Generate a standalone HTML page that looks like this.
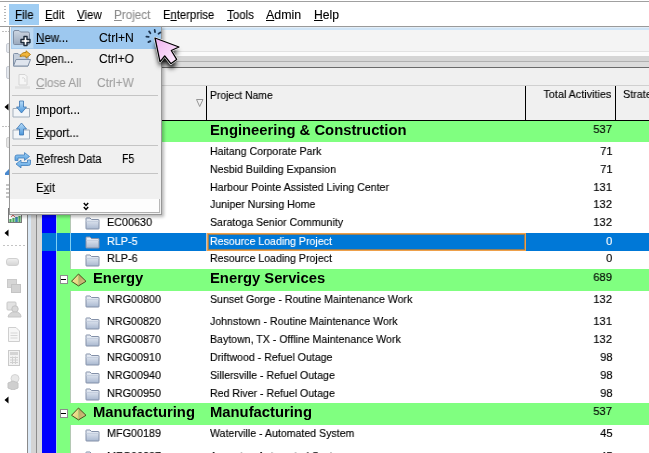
<!DOCTYPE html><html><head><meta charset="utf-8"><style>
*{margin:0;padding:0;box-sizing:border-box}
html,body{width:649px;height:453px;overflow:hidden;background:#fff;position:relative;font-family:"Liberation Sans",sans-serif;color:#000}
.a{position:absolute}
.t{position:absolute;white-space:nowrap;will-change:transform}
.k{-webkit-text-stroke:0.15px currentColor}
.mb{font-size:11.5px;line-height:18px;height:18px;top:6px}
.u{text-decoration:underline;text-underline-offset:1px}
</style></head><body>
<div class="a" style="left:0px;top:0px;width:649px;height:26px;background:#fff;"></div>
<div class="a" style="left:0px;top:1px;width:649px;height:1px;background:#a0a0a0;"></div>
<div class="a" style="left:4px;top:6px;width:2px;height:1px;background:#b5b5b5;"></div>
<div class="a" style="left:4px;top:9px;width:2px;height:1px;background:#b5b5b5;"></div>
<div class="a" style="left:4px;top:12px;width:2px;height:1px;background:#b5b5b5;"></div>
<div class="a" style="left:4px;top:15px;width:2px;height:1px;background:#b5b5b5;"></div>
<div class="a" style="left:4px;top:18px;width:2px;height:1px;background:#b5b5b5;"></div>
<div class="a" style="left:4px;top:21px;width:2px;height:1px;background:#b5b5b5;"></div>
<div class="a" style="left:9px;top:4px;width:30px;height:21px;background:#9fcdf3;"></div>
<div class="t" style="left:15px;top:5.5px;height:18px;line-height:18px;font-size:12px;transform:scaleX(0.959);transform-origin:left center;-webkit-text-stroke:0.12px currentColor;"><span class="u">F</span>ile</div>
<div class="t" style="left:45px;top:5.5px;height:18px;line-height:18px;font-size:12px;transform:scaleX(0.94);transform-origin:left center;-webkit-text-stroke:0.12px currentColor;"><span class="u">E</span>dit</div>
<div class="t" style="left:77px;top:5.5px;height:18px;line-height:18px;font-size:12px;transform:scaleX(0.956);transform-origin:left center;-webkit-text-stroke:0.12px currentColor;"><span class="u">V</span>iew</div>
<div class="t" style="left:114px;top:5.5px;height:18px;line-height:18px;font-size:12px;color:#8d8d8d;transform:scaleX(0.975);transform-origin:left center;-webkit-text-stroke:0.12px currentColor;"><span class="u">P</span>roject</div>
<div class="t" style="left:163px;top:5.5px;height:18px;line-height:18px;font-size:12px;transform:scaleX(0.936);transform-origin:left center;-webkit-text-stroke:0.12px currentColor;">E<span class="u">n</span>terprise</div>
<div class="t" style="left:227px;top:5.5px;height:18px;line-height:18px;font-size:12px;transform:scaleX(0.963);transform-origin:left center;-webkit-text-stroke:0.12px currentColor;"><span class="u">T</span>ools</div>
<div class="t" style="left:266px;top:5.5px;height:18px;line-height:18px;font-size:12px;transform:scaleX(1.033);transform-origin:left center;-webkit-text-stroke:0.12px currentColor;"><span class="u">A</span>dmin</div>
<div class="t" style="left:314px;top:5.5px;height:18px;line-height:18px;font-size:12px;transform:scaleX(1.013);transform-origin:left center;-webkit-text-stroke:0.12px currentColor;"><span class="u">H</span>elp</div>
<div class="a" style="left:0px;top:26px;width:649px;height:1px;background:#9a9a9a;"></div>
<div class="a" style="left:27px;top:27px;width:622px;height:1px;background:#e2edf7;"></div>
<div class="a" style="left:27px;top:28px;width:622px;height:2px;background:#cfe4f6;"></div>
<div class="a" style="left:27px;top:30px;width:622px;height:21px;background:#f4f4f4;"></div>
<div class="a" style="left:27px;top:51px;width:622px;height:1px;background:#e2e2e2;"></div>
<div class="a" style="left:27px;top:52px;width:622px;height:4px;background:#fbfbfb;"></div>
<div class="a" style="left:27px;top:56px;width:622px;height:5px;background:#d5d5d5;"></div>
<div class="a" style="left:27px;top:61px;width:622px;height:1px;background:#b0b0b0;"></div>
<div class="a" style="left:27px;top:62px;width:622px;height:5px;background:#dcdcdc;"></div>
<div class="a" style="left:27px;top:67px;width:622px;height:1px;background:#6a6a6a;"></div>
<div class="a" style="left:37px;top:68px;width:612px;height:53px;background:#f0f0f0;"></div>
<div class="a" style="left:37px;top:85px;width:612px;height:1px;background:#d0d0d0;"></div>
<div class="a" style="left:37px;top:120px;width:612px;height:1px;background:#000;"></div>
<div class="a" style="left:206px;top:86px;width:1px;height:34px;background:#000;"></div>
<div class="a" style="left:525px;top:86px;width:1px;height:34px;background:#000;"></div>
<div class="a" style="left:615px;top:86px;width:1px;height:34px;background:#000;"></div>
<div class="t k" style="left:210px;top:86.0px;height:18px;line-height:18px;font-size:10.9px;transform:scaleX(0.9495);transform-origin:left center;">Project Name</div>
<div class="t k" style="right:38px;top:85.0px;height:18px;line-height:18px;font-size:11.2px;transform:scaleX(0.9643);transform-origin:right center;">Total Activities</div>
<div class="t k" style="left:623px;top:85.0px;height:18px;line-height:18px;font-size:11.2px;transform:scaleX(0.9643);transform-origin:left center;">Strategy</div>
<svg class="a" style="left:195px;top:98px" width="10" height="10" viewBox="0 0 10 10"><path d="M1.5 1.5 L8 1.5 L4.7 8.5 Z" fill="none" stroke="#8c8c8c" stroke-width="0.9"/></svg>
<div class="a" style="left:27px;top:67px;width:1px;height:386px;background:#8a8a8a;"></div>
<div class="a" style="left:28px;top:68px;width:3px;height:385px;background:#dbe9f6;"></div>
<div class="a" style="left:31px;top:68px;width:5px;height:385px;background:#d4d4d4;"></div>
<div class="a" style="left:36px;top:68px;width:1px;height:385px;background:#8c8c8c;"></div>
<div class="a" style="left:37px;top:121px;width:5px;height:332px;background:#d8d8d8;"></div>
<div class="a" style="left:42px;top:121px;width:14px;height:332px;background:#0000ff;"></div>
<div class="a" style="left:56px;top:121px;width:15px;height:332px;background:#80ff80;"></div>
<div class="a" style="left:70px;top:121px;width:1px;height:332px;background:#b4c8b4;"></div>
<div class="a" style="left:71px;top:121px;width:578px;height:21px;background:#80ff80;"></div>
<div class="a" style="left:56px;top:121px;width:15px;height:21px;background:#80ff80;"></div>
<div class="t" style="left:210px;top:119.69999999999999px;height:20px;line-height:20px;font-size:14.8px;font-weight:bold">Engineering & Construction</div>
<div class="t k" style="right:36.5px;top:119.69999999999999px;height:18px;line-height:18px;font-size:11.4px;transform:scaleX(0.9825);transform-origin:right center;">537</div>
<svg class="a" style="left:85px;top:146.7px" width="15" height="13" viewBox="0 0 15 13"><defs><linearGradient id="fg" x1="0" y1="0" x2="0" y2="1"><stop offset="0" stop-color="#eef2f8"/><stop offset="1" stop-color="#a9b8d0"/></linearGradient></defs><path d="M1 3.5 V1.5 Q1 1 1.5 1 H5 L6.5 2.5 H13.5 Q14 2.5 14 3 V11.5 Q14 12 13.5 12 H1.5 Q1 12 1 11.5 Z" fill="url(#fg)" stroke="#8390a8" stroke-width="1"/><path d="M1.5 4.5 H13.5" stroke="#c5cfdf" stroke-width="1"/></svg>
<div class="t k" style="left:210px;top:142.0px;height:18px;line-height:18px;font-size:11.4px;transform:scaleX(0.9298);transform-origin:left center;">Haitang Corporate Park</div>
<div class="t k" style="right:36.5px;top:142.0px;height:18px;line-height:18px;font-size:11.4px;transform:scaleX(0.9825);transform-origin:right center;">71</div>
<svg class="a" style="left:85px;top:164.2px" width="15" height="13" viewBox="0 0 15 13"><defs><linearGradient id="fg" x1="0" y1="0" x2="0" y2="1"><stop offset="0" stop-color="#eef2f8"/><stop offset="1" stop-color="#a9b8d0"/></linearGradient></defs><path d="M1 3.5 V1.5 Q1 1 1.5 1 H5 L6.5 2.5 H13.5 Q14 2.5 14 3 V11.5 Q14 12 13.5 12 H1.5 Q1 12 1 11.5 Z" fill="url(#fg)" stroke="#8390a8" stroke-width="1"/><path d="M1.5 4.5 H13.5" stroke="#c5cfdf" stroke-width="1"/></svg>
<div class="t k" style="left:210px;top:159.5px;height:18px;line-height:18px;font-size:11.4px;transform:scaleX(0.9298);transform-origin:left center;">Nesbid Building Expansion</div>
<div class="t k" style="right:36.5px;top:159.5px;height:18px;line-height:18px;font-size:11.4px;transform:scaleX(0.9825);transform-origin:right center;">71</div>
<svg class="a" style="left:85px;top:182.2px" width="15" height="13" viewBox="0 0 15 13"><defs><linearGradient id="fg" x1="0" y1="0" x2="0" y2="1"><stop offset="0" stop-color="#eef2f8"/><stop offset="1" stop-color="#a9b8d0"/></linearGradient></defs><path d="M1 3.5 V1.5 Q1 1 1.5 1 H5 L6.5 2.5 H13.5 Q14 2.5 14 3 V11.5 Q14 12 13.5 12 H1.5 Q1 12 1 11.5 Z" fill="url(#fg)" stroke="#8390a8" stroke-width="1"/><path d="M1.5 4.5 H13.5" stroke="#c5cfdf" stroke-width="1"/></svg>
<div class="t k" style="left:210px;top:177.5px;height:18px;line-height:18px;font-size:11.4px;transform:scaleX(0.9298);transform-origin:left center;">Harbour Pointe Assisted Living Center</div>
<div class="t k" style="right:36.5px;top:177.5px;height:18px;line-height:18px;font-size:11.4px;transform:scaleX(0.9825);transform-origin:right center;">131</div>
<svg class="a" style="left:85px;top:199.7px" width="15" height="13" viewBox="0 0 15 13"><defs><linearGradient id="fg" x1="0" y1="0" x2="0" y2="1"><stop offset="0" stop-color="#eef2f8"/><stop offset="1" stop-color="#a9b8d0"/></linearGradient></defs><path d="M1 3.5 V1.5 Q1 1 1.5 1 H5 L6.5 2.5 H13.5 Q14 2.5 14 3 V11.5 Q14 12 13.5 12 H1.5 Q1 12 1 11.5 Z" fill="url(#fg)" stroke="#8390a8" stroke-width="1"/><path d="M1.5 4.5 H13.5" stroke="#c5cfdf" stroke-width="1"/></svg>
<div class="t k" style="left:210px;top:195.0px;height:18px;line-height:18px;font-size:11.4px;transform:scaleX(0.9298);transform-origin:left center;">Juniper Nursing Home</div>
<div class="t k" style="right:36.5px;top:195.0px;height:18px;line-height:18px;font-size:11.4px;transform:scaleX(0.9825);transform-origin:right center;">132</div>
<svg class="a" style="left:85px;top:217.2px" width="15" height="13" viewBox="0 0 15 13"><defs><linearGradient id="fg" x1="0" y1="0" x2="0" y2="1"><stop offset="0" stop-color="#eef2f8"/><stop offset="1" stop-color="#a9b8d0"/></linearGradient></defs><path d="M1 3.5 V1.5 Q1 1 1.5 1 H5 L6.5 2.5 H13.5 Q14 2.5 14 3 V11.5 Q14 12 13.5 12 H1.5 Q1 12 1 11.5 Z" fill="url(#fg)" stroke="#8390a8" stroke-width="1"/><path d="M1.5 4.5 H13.5" stroke="#c5cfdf" stroke-width="1"/></svg>
<div class="t k" style="left:107px;top:212.5px;height:18px;line-height:18px;font-size:11.4px;transform:scaleX(0.9474);transform-origin:left center;">EC00630</div>
<div class="t k" style="left:210px;top:212.5px;height:18px;line-height:18px;font-size:11.4px;transform:scaleX(0.9298);transform-origin:left center;">Saratoga Senior Community</div>
<div class="t k" style="right:36.5px;top:212.5px;height:18px;line-height:18px;font-size:11.4px;transform:scaleX(0.9825);transform-origin:right center;">132</div>
<div class="a" style="left:42px;top:233px;width:607px;height:18px;background:#0078d7;"></div>
<div class="a" style="left:56px;top:233px;width:1px;height:18px;background:#7fd0f4;"></div>
<div class="a" style="left:70px;top:233px;width:1px;height:18px;background:#7fd0f4;"></div>
<div class="a" style="left:206px;top:233px;width:1px;height:18px;background:#b8c4cc;"></div>
<div class="a" style="left:207px;top:233px;width:319px;height:18px;border:1px solid #eea04a;box-shadow:inset 0 0 0 1px #94805e"></div>
<svg class="a" style="left:85px;top:236.2px" width="15" height="13" viewBox="0 0 15 13"><defs><linearGradient id="fg" x1="0" y1="0" x2="0" y2="1"><stop offset="0" stop-color="#eef2f8"/><stop offset="1" stop-color="#a9b8d0"/></linearGradient></defs><path d="M1 3.5 V1.5 Q1 1 1.5 1 H5 L6.5 2.5 H13.5 Q14 2.5 14 3 V11.5 Q14 12 13.5 12 H1.5 Q1 12 1 11.5 Z" fill="url(#fg)" stroke="#8390a8" stroke-width="1"/><path d="M1.5 4.5 H13.5" stroke="#c5cfdf" stroke-width="1"/></svg>
<div class="t k" style="left:107px;top:231.5px;height:18px;line-height:18px;font-size:11.4px;color:#fff;transform:scaleX(0.9474);transform-origin:left center;">RLP-5</div>
<div class="t k" style="left:210px;top:231.5px;height:18px;line-height:18px;font-size:11.4px;color:#fff;transform:scaleX(0.9298);transform-origin:left center;">Resource Loading Project</div>
<div class="t k" style="right:36.5px;top:231.5px;height:18px;line-height:18px;font-size:11.4px;color:#fff;transform:scaleX(0.9825);transform-origin:right center;">0</div>
<svg class="a" style="left:85px;top:254.0px" width="15" height="13" viewBox="0 0 15 13"><defs><linearGradient id="fg" x1="0" y1="0" x2="0" y2="1"><stop offset="0" stop-color="#eef2f8"/><stop offset="1" stop-color="#a9b8d0"/></linearGradient></defs><path d="M1 3.5 V1.5 Q1 1 1.5 1 H5 L6.5 2.5 H13.5 Q14 2.5 14 3 V11.5 Q14 12 13.5 12 H1.5 Q1 12 1 11.5 Z" fill="url(#fg)" stroke="#8390a8" stroke-width="1"/><path d="M1.5 4.5 H13.5" stroke="#c5cfdf" stroke-width="1"/></svg>
<div class="t k" style="left:107px;top:249.3px;height:18px;line-height:18px;font-size:11.4px;transform:scaleX(0.9474);transform-origin:left center;">RLP-6</div>
<div class="t k" style="left:210px;top:249.3px;height:18px;line-height:18px;font-size:11.4px;transform:scaleX(0.9298);transform-origin:left center;">Resource Loading Project</div>
<div class="t k" style="right:36.5px;top:249.3px;height:18px;line-height:18px;font-size:11.4px;transform:scaleX(0.9825);transform-origin:right center;">0</div>
<div class="a" style="left:71px;top:269px;width:578px;height:21.5px;background:#80ff80;"></div>
<div class="a" style="left:56px;top:269px;width:15px;height:21.5px;background:#80ff80;"></div>
<div class="a" style="left:59.5px;top:275.25px;width:8.5px;height:8.5px;background:#fff;border:1px solid #8c8c8c"></div>
<div class="a" style="left:61px;top:278.75px;width:5px;height:1.6px;background:#000;"></div>
<svg class="a" style="left:71px;top:273.25px" width="16" height="14" viewBox="0 0 16 14"><defs><linearGradient id="pyl" x1="0" y1="0" x2="1" y2="1"><stop offset="0" stop-color="#f6ec9e"/><stop offset="1" stop-color="#e2cf7a"/></linearGradient><linearGradient id="pyr" x1="0" y1="0" x2="1" y2="1"><stop offset="0" stop-color="#b6a25a"/><stop offset="1" stop-color="#d8c88a"/></linearGradient></defs><path d="M7.5 1 L0.5 8.3 L7.5 12.9 Z" fill="url(#pyl)"/><path d="M7.5 1 L15 8.3 L7.5 12.9 Z" fill="url(#pyr)"/><path d="M7.5 1 L0.5 8.3 L7.5 12.9 L15 8.3 Z" fill="none" stroke="#3f3f14" stroke-width="0.9" stroke-linejoin="round"/></svg>
<div class="t" style="left:93px;top:267.95px;height:20px;line-height:20px;font-size:14.8px;font-weight:bold">Energy</div>
<div class="t" style="left:210px;top:267.95px;height:20px;line-height:20px;font-size:14.8px;font-weight:bold">Energy Services</div>
<div class="t k" style="right:36.5px;top:267.95px;height:18px;line-height:18px;font-size:11.4px;transform:scaleX(0.9825);transform-origin:right center;">689</div>
<svg class="a" style="left:85px;top:294.9px" width="15" height="13" viewBox="0 0 15 13"><defs><linearGradient id="fg" x1="0" y1="0" x2="0" y2="1"><stop offset="0" stop-color="#eef2f8"/><stop offset="1" stop-color="#a9b8d0"/></linearGradient></defs><path d="M1 3.5 V1.5 Q1 1 1.5 1 H5 L6.5 2.5 H13.5 Q14 2.5 14 3 V11.5 Q14 12 13.5 12 H1.5 Q1 12 1 11.5 Z" fill="url(#fg)" stroke="#8390a8" stroke-width="1"/><path d="M1.5 4.5 H13.5" stroke="#c5cfdf" stroke-width="1"/></svg>
<div class="t k" style="left:107px;top:290.2px;height:18px;line-height:18px;font-size:11.4px;transform:scaleX(0.9474);transform-origin:left center;">NRG00800</div>
<div class="t k" style="left:210px;top:290.2px;height:18px;line-height:18px;font-size:11.4px;transform:scaleX(0.9298);transform-origin:left center;">Sunset Gorge - Routine Maintenance Work</div>
<div class="t k" style="right:36.5px;top:290.2px;height:18px;line-height:18px;font-size:11.4px;transform:scaleX(0.9825);transform-origin:right center;">132</div>
<svg class="a" style="left:85px;top:316.5px" width="15" height="13" viewBox="0 0 15 13"><defs><linearGradient id="fg" x1="0" y1="0" x2="0" y2="1"><stop offset="0" stop-color="#eef2f8"/><stop offset="1" stop-color="#a9b8d0"/></linearGradient></defs><path d="M1 3.5 V1.5 Q1 1 1.5 1 H5 L6.5 2.5 H13.5 Q14 2.5 14 3 V11.5 Q14 12 13.5 12 H1.5 Q1 12 1 11.5 Z" fill="url(#fg)" stroke="#8390a8" stroke-width="1"/><path d="M1.5 4.5 H13.5" stroke="#c5cfdf" stroke-width="1"/></svg>
<div class="t k" style="left:107px;top:311.8px;height:18px;line-height:18px;font-size:11.4px;transform:scaleX(0.9474);transform-origin:left center;">NRG00820</div>
<div class="t k" style="left:210px;top:311.8px;height:18px;line-height:18px;font-size:11.4px;transform:scaleX(0.9298);transform-origin:left center;">Johnstown - Routine Maintenance Work</div>
<div class="t k" style="right:36.5px;top:311.8px;height:18px;line-height:18px;font-size:11.4px;transform:scaleX(0.9825);transform-origin:right center;">131</div>
<svg class="a" style="left:85px;top:334.2px" width="15" height="13" viewBox="0 0 15 13"><defs><linearGradient id="fg" x1="0" y1="0" x2="0" y2="1"><stop offset="0" stop-color="#eef2f8"/><stop offset="1" stop-color="#a9b8d0"/></linearGradient></defs><path d="M1 3.5 V1.5 Q1 1 1.5 1 H5 L6.5 2.5 H13.5 Q14 2.5 14 3 V11.5 Q14 12 13.5 12 H1.5 Q1 12 1 11.5 Z" fill="url(#fg)" stroke="#8390a8" stroke-width="1"/><path d="M1.5 4.5 H13.5" stroke="#c5cfdf" stroke-width="1"/></svg>
<div class="t k" style="left:107px;top:329.5px;height:18px;line-height:18px;font-size:11.4px;transform:scaleX(0.9474);transform-origin:left center;">NRG00870</div>
<div class="t k" style="left:210px;top:329.5px;height:18px;line-height:18px;font-size:11.4px;transform:scaleX(0.9298);transform-origin:left center;">Baytown, TX - Offline Maintenance Work</div>
<div class="t k" style="right:36.5px;top:329.5px;height:18px;line-height:18px;font-size:11.4px;transform:scaleX(0.9825);transform-origin:right center;">132</div>
<svg class="a" style="left:85px;top:353.0px" width="15" height="13" viewBox="0 0 15 13"><defs><linearGradient id="fg" x1="0" y1="0" x2="0" y2="1"><stop offset="0" stop-color="#eef2f8"/><stop offset="1" stop-color="#a9b8d0"/></linearGradient></defs><path d="M1 3.5 V1.5 Q1 1 1.5 1 H5 L6.5 2.5 H13.5 Q14 2.5 14 3 V11.5 Q14 12 13.5 12 H1.5 Q1 12 1 11.5 Z" fill="url(#fg)" stroke="#8390a8" stroke-width="1"/><path d="M1.5 4.5 H13.5" stroke="#c5cfdf" stroke-width="1"/></svg>
<div class="t k" style="left:107px;top:348.3px;height:18px;line-height:18px;font-size:11.4px;transform:scaleX(0.9474);transform-origin:left center;">NRG00910</div>
<div class="t k" style="left:210px;top:348.3px;height:18px;line-height:18px;font-size:11.4px;transform:scaleX(0.9298);transform-origin:left center;">Driftwood - Refuel Outage</div>
<div class="t k" style="right:36.5px;top:348.3px;height:18px;line-height:18px;font-size:11.4px;transform:scaleX(0.9825);transform-origin:right center;">98</div>
<svg class="a" style="left:85px;top:370.8px" width="15" height="13" viewBox="0 0 15 13"><defs><linearGradient id="fg" x1="0" y1="0" x2="0" y2="1"><stop offset="0" stop-color="#eef2f8"/><stop offset="1" stop-color="#a9b8d0"/></linearGradient></defs><path d="M1 3.5 V1.5 Q1 1 1.5 1 H5 L6.5 2.5 H13.5 Q14 2.5 14 3 V11.5 Q14 12 13.5 12 H1.5 Q1 12 1 11.5 Z" fill="url(#fg)" stroke="#8390a8" stroke-width="1"/><path d="M1.5 4.5 H13.5" stroke="#c5cfdf" stroke-width="1"/></svg>
<div class="t k" style="left:107px;top:366.1px;height:18px;line-height:18px;font-size:11.4px;transform:scaleX(0.9474);transform-origin:left center;">NRG00940</div>
<div class="t k" style="left:210px;top:366.1px;height:18px;line-height:18px;font-size:11.4px;transform:scaleX(0.9298);transform-origin:left center;">Sillersville - Refuel Outage</div>
<div class="t k" style="right:36.5px;top:366.1px;height:18px;line-height:18px;font-size:11.4px;transform:scaleX(0.9825);transform-origin:right center;">98</div>
<svg class="a" style="left:85px;top:388.4px" width="15" height="13" viewBox="0 0 15 13"><defs><linearGradient id="fg" x1="0" y1="0" x2="0" y2="1"><stop offset="0" stop-color="#eef2f8"/><stop offset="1" stop-color="#a9b8d0"/></linearGradient></defs><path d="M1 3.5 V1.5 Q1 1 1.5 1 H5 L6.5 2.5 H13.5 Q14 2.5 14 3 V11.5 Q14 12 13.5 12 H1.5 Q1 12 1 11.5 Z" fill="url(#fg)" stroke="#8390a8" stroke-width="1"/><path d="M1.5 4.5 H13.5" stroke="#c5cfdf" stroke-width="1"/></svg>
<div class="t k" style="left:107px;top:383.7px;height:18px;line-height:18px;font-size:11.4px;transform:scaleX(0.9474);transform-origin:left center;">NRG00950</div>
<div class="t k" style="left:210px;top:383.7px;height:18px;line-height:18px;font-size:11.4px;transform:scaleX(0.9298);transform-origin:left center;">Red River - Refuel Outage</div>
<div class="t k" style="right:36.5px;top:383.7px;height:18px;line-height:18px;font-size:11.4px;transform:scaleX(0.9825);transform-origin:right center;">98</div>
<div class="a" style="left:71px;top:403px;width:578px;height:21.5px;background:#80ff80;"></div>
<div class="a" style="left:56px;top:403px;width:15px;height:21.5px;background:#80ff80;"></div>
<div class="a" style="left:59.5px;top:409.25px;width:8.5px;height:8.5px;background:#fff;border:1px solid #8c8c8c"></div>
<div class="a" style="left:61px;top:412.75px;width:5px;height:1.6px;background:#000;"></div>
<svg class="a" style="left:71px;top:407.25px" width="16" height="14" viewBox="0 0 16 14"><defs><linearGradient id="pyl" x1="0" y1="0" x2="1" y2="1"><stop offset="0" stop-color="#f6ec9e"/><stop offset="1" stop-color="#e2cf7a"/></linearGradient><linearGradient id="pyr" x1="0" y1="0" x2="1" y2="1"><stop offset="0" stop-color="#b6a25a"/><stop offset="1" stop-color="#d8c88a"/></linearGradient></defs><path d="M7.5 1 L0.5 8.3 L7.5 12.9 Z" fill="url(#pyl)"/><path d="M7.5 1 L15 8.3 L7.5 12.9 Z" fill="url(#pyr)"/><path d="M7.5 1 L0.5 8.3 L7.5 12.9 L15 8.3 Z" fill="none" stroke="#3f3f14" stroke-width="0.9" stroke-linejoin="round"/></svg>
<div class="t" style="left:93px;top:401.95px;height:20px;line-height:20px;font-size:14.8px;font-weight:bold">Manufacturing</div>
<div class="t" style="left:210px;top:401.95px;height:20px;line-height:20px;font-size:14.8px;font-weight:bold">Manufacturing</div>
<div class="t k" style="right:36.5px;top:401.95px;height:18px;line-height:18px;font-size:11.4px;transform:scaleX(0.9825);transform-origin:right center;">537</div>
<svg class="a" style="left:85px;top:428.5px" width="15" height="13" viewBox="0 0 15 13"><defs><linearGradient id="fg" x1="0" y1="0" x2="0" y2="1"><stop offset="0" stop-color="#eef2f8"/><stop offset="1" stop-color="#a9b8d0"/></linearGradient></defs><path d="M1 3.5 V1.5 Q1 1 1.5 1 H5 L6.5 2.5 H13.5 Q14 2.5 14 3 V11.5 Q14 12 13.5 12 H1.5 Q1 12 1 11.5 Z" fill="url(#fg)" stroke="#8390a8" stroke-width="1"/><path d="M1.5 4.5 H13.5" stroke="#c5cfdf" stroke-width="1"/></svg>
<div class="t k" style="left:107px;top:423.8px;height:18px;line-height:18px;font-size:11.4px;transform:scaleX(0.9474);transform-origin:left center;">MFG00189</div>
<div class="t k" style="left:210px;top:423.8px;height:18px;line-height:18px;font-size:11.4px;transform:scaleX(0.9298);transform-origin:left center;">Waterville - Automated System</div>
<div class="t k" style="right:36.5px;top:423.8px;height:18px;line-height:18px;font-size:11.4px;transform:scaleX(0.9825);transform-origin:right center;">45</div>
<svg class="a" style="left:85px;top:451.2px" width="15" height="13" viewBox="0 0 15 13"><defs><linearGradient id="fg" x1="0" y1="0" x2="0" y2="1"><stop offset="0" stop-color="#eef2f8"/><stop offset="1" stop-color="#a9b8d0"/></linearGradient></defs><path d="M1 3.5 V1.5 Q1 1 1.5 1 H5 L6.5 2.5 H13.5 Q14 2.5 14 3 V11.5 Q14 12 13.5 12 H1.5 Q1 12 1 11.5 Z" fill="url(#fg)" stroke="#8390a8" stroke-width="1"/><path d="M1.5 4.5 H13.5" stroke="#c5cfdf" stroke-width="1"/></svg>
<div class="t k" style="left:107px;top:446.5px;height:18px;line-height:18px;font-size:11.4px;transform:scaleX(0.9474);transform-origin:left center;">MFG00237</div>
<div class="t k" style="left:210px;top:446.5px;height:18px;line-height:18px;font-size:11.4px;transform:scaleX(0.9298);transform-origin:left center;">Augusta - Automated System</div>
<div class="t k" style="right:36.5px;top:446.5px;height:18px;line-height:18px;font-size:11.4px;transform:scaleX(0.9825);transform-origin:right center;">45</div>
<div class="a" style="left:56px;top:121px;width:1px;height:112px;background:#a6dcd4;"></div>
<div class="a" style="left:56px;top:251px;width:1px;height:202px;background:#a6dcd4;"></div>
<div class="a" style="left:0px;top:27px;width:27px;height:426px;background:#fff;"></div>
<div class="a" style="left:2px;top:31px;width:1.5px;height:1px;background:#c0c0c0;"></div>
<div class="a" style="left:2px;top:126px;width:1.5px;height:1px;background:#c0c0c0;"></div>
<div class="a" style="left:5px;top:31px;width:1.5px;height:1px;background:#c0c0c0;"></div>
<div class="a" style="left:5px;top:126px;width:1.5px;height:1px;background:#c0c0c0;"></div>
<div class="a" style="left:8px;top:31px;width:1.5px;height:1px;background:#c0c0c0;"></div>
<div class="a" style="left:8px;top:126px;width:1.5px;height:1px;background:#c0c0c0;"></div>
<div class="a" style="left:6px;top:43px;width:6px;height:10px;background:#e4e8ee;border:1px solid #c8ccd4;border-radius:2px"></div>
<div class="a" style="left:6px;top:66px;width:6px;height:13px;background:#e4e8ee;border:1px solid #c8ccd4;border-radius:2px"></div>
<div class="a" style="left:6px;top:137px;width:6px;height:11px;background:#e6e6e6;border:1px solid #cfcfcf;border-radius:2px"></div>
<svg class="a" style="left:4px;top:103px" width="5" height="8" viewBox="0 0 5 8"><path d="M4.5 0.5 L0.5 4 L4.5 7.5Z" fill="#000"/></svg>
<svg class="a" style="left:5px;top:169px" width="6" height="6" viewBox="0 0 6 6"><path d="M0 4 L4 0 L6 2 L6 6 L0 6Z" fill="#4a8ad0"/></svg>
<svg class="a" style="left:6px;top:183px" width="5" height="16" viewBox="0 0 5 16"><path d="M0 2 H5 M0 6 H5 M0 10 H5 M0 14 H5" stroke="#8a8a8a" stroke-width="1"/></svg>
<div class="a" style="left:7.5px;top:208px;width:14px;height:15px;background:#fff;border:1px solid #7a7a7a"></div>
<svg class="a" style="left:9px;top:215px" width="12" height="7" viewBox="0 0 12 7"><path d="M2 2 L4 0 L6 2" stroke="#e07070" fill="none" stroke-width="1"/><path d="M1.5 7 V4 M4.5 7 V3 M7.5 7 V2 M10.5 7 V1" stroke="#4aa85a" stroke-width="2.2"/><path d="M7.5 7 V2" stroke="#3a80b8" stroke-width="2.2"/></svg>
<svg class="a" style="left:4px;top:229px" width="5" height="8" viewBox="0 0 5 8"><path d="M4.5 0.5 L0.5 4 L4.5 7.5Z" fill="#000"/></svg>
<div class="a" style="left:3px;top:245px;width:2px;height:1px;background:#c4c4c4;"></div>
<div class="a" style="left:7px;top:245px;width:2px;height:1px;background:#c4c4c4;"></div>
<div class="a" style="left:11px;top:245px;width:2px;height:1px;background:#c4c4c4;"></div>
<div class="a" style="left:15px;top:245px;width:2px;height:1px;background:#c4c4c4;"></div>
<div class="a" style="left:19px;top:245px;width:2px;height:1px;background:#c4c4c4;"></div>
<div class="a" style="left:23px;top:245px;width:2px;height:1px;background:#c4c4c4;"></div>
<div class="a" style="left:6px;top:258px;width:13px;height:8px;border-radius:3px;background:linear-gradient(#eeeeee,#d6d6d6);border:1px solid #d0d0d0"></div>
<div class="a" style="left:7px;top:279px;width:10px;height:9px;background:#d6d6d6;border:1px solid #cacaca"></div>
<div class="a" style="left:11px;top:284px;width:10px;height:9px;background:#d2d2d2;border:1px solid #c4c4c4"></div>
<svg class="a" style="left:6px;top:301px" width="16" height="17" viewBox="0 0 16 17"><rect x="1" y="1" width="9" height="8" rx="1" fill="#e2e2e2" stroke="#c8c8c8"/><circle cx="9" cy="8" r="3.2" fill="#d8d8d8" stroke="#c4c4c4"/><path d="M2 16 Q3 11 9 11 Q15 11 15 16Z" fill="#d6d6d6" stroke="#c6c6c6"/></svg>
<svg class="a" style="left:8px;top:327px" width="12" height="15" viewBox="0 0 12 15"><path d="M0.5 0.5 H8 L11.5 4 V14.5 H0.5Z" fill="#f6f6f6" stroke="#cfcfcf"/><path d="M2.5 6 H9.5 M2.5 8.5 H9.5 M2.5 11 H9.5" stroke="#d6d6d6"/></svg>
<svg class="a" style="left:8px;top:350px" width="12" height="16" viewBox="0 0 12 16"><rect x="0.5" y="0.5" width="11" height="15" fill="#f2f2f2" stroke="#cacaca"/><rect x="2" y="2" width="8" height="3" fill="#d4d4d4"/><path d="M2 7.5 H10 M2 10 H10 M2 12.5 H10 M4.5 6.5 V14 M7.5 6.5 V14" stroke="#d0d0d0"/></svg>
<svg class="a" style="left:7px;top:374px" width="13" height="16" viewBox="0 0 13 16"><ellipse cx="8" cy="4.5" rx="4" ry="4" fill="#e8e8e8" stroke="#d4d4d4"/><path d="M1 9 L6 7 L11 9 V14 L6 16 L1 14Z" fill="#cfcfcf" stroke="#c4c4c4"/></svg>
<svg class="a" style="left:4px;top:396px" width="5" height="8" viewBox="0 0 5 8"><path d="M4.5 0.5 L0.5 4 L4.5 7.5Z" fill="#000"/></svg>
<div class="a" style="left:9px;top:26px;width:153px;height:189px;box-shadow:2px 2px 3px rgba(0,0,0,0.28)"></div>
<div class="a" style="left:9px;top:26px;width:153px;height:189px;background:#f0f0f0;border:1px solid #979797"></div>
<div class="a" style="left:10px;top:199px;width:150px;height:14px;background:#fdfdfd;"></div>
<div class="a" style="left:159px;top:199px;width:1px;height:13px;background:#b8b8b8;"></div>
<div class="a" style="left:10px;top:212px;width:150px;height:1px;background:#b0b0b0;"></div>
<div class="a" style="left:11px;top:27px;width:150px;height:22px;background:#9dc8ef;"></div>
<div class="a" style="left:11px;top:27px;width:23px;height:22px;background:#bcd9f2;border:1px solid #a9cdee"></div>
<div class="t" style="left:36px;top:28.4px;height:20px;line-height:20px;font-size:12px;transform:scaleX(0.967);transform-origin:left center;-webkit-text-stroke:0.12px currentColor;"><span class="u">N</span>ew...</div>
<div class="t" style="left:98.6px;top:28.4px;height:20px;line-height:20px;font-size:12px;transform:scaleX(1.013);transform-origin:left center;-webkit-text-stroke:0.12px currentColor;">Ctrl+N</div>
<div class="t" style="left:36px;top:49.3px;height:20px;line-height:20px;font-size:12px;transform:scaleX(0.948);transform-origin:left center;-webkit-text-stroke:0.12px currentColor;"><span class="u">O</span>pen...</div>
<div class="t" style="left:98.6px;top:49.3px;height:20px;line-height:20px;font-size:12px;transform:scaleX(0.993);transform-origin:left center;-webkit-text-stroke:0.12px currentColor;">Ctrl+O</div>
<div class="t" style="left:36px;top:72.5px;height:20px;line-height:20px;font-size:12px;color:#a0a0a0;transform:scaleX(0.971);transform-origin:left center;-webkit-text-stroke:0.12px currentColor;"><span class="u">C</span>lose All</div>
<div class="t" style="left:97px;top:72.5px;height:20px;line-height:20px;font-size:12px;color:#a0a0a0;transform:scaleX(0.993);transform-origin:left center;-webkit-text-stroke:0.12px currentColor;">Ctrl+W</div>
<div class="t" style="left:36px;top:100.2px;height:20px;line-height:20px;font-size:12px;transform:scaleX(1.001);transform-origin:left center;-webkit-text-stroke:0.12px currentColor;"><span class="u">I</span>mport...</div>
<div class="t" style="left:36px;top:122.5px;height:20px;line-height:20px;font-size:12px;transform:scaleX(0.961);transform-origin:left center;-webkit-text-stroke:0.12px currentColor;"><span class="u">E</span>xport...</div>
<div class="t" style="left:36px;top:149.3px;height:20px;line-height:20px;font-size:12px;transform:scaleX(0.927);transform-origin:left center;-webkit-text-stroke:0.12px currentColor;"><span class="u">R</span>efresh Data</div>
<div class="t" style="left:121.7px;top:149.3px;height:20px;line-height:20px;font-size:12px;transform:scaleX(0.878);transform-origin:left center;-webkit-text-stroke:0.12px currentColor;">F5</div>
<div class="t" style="left:36px;top:177.70000000000002px;height:20px;line-height:20px;font-size:12px;transform:scaleX(0.952);transform-origin:left center;-webkit-text-stroke:0.12px currentColor;">E<span class="u">x</span>it</div>
<div class="a" style="left:12px;top:95px;width:146px;height:1px;background:#c4c4c4;"></div>
<div class="a" style="left:12px;top:145px;width:146px;height:1px;background:#c4c4c4;"></div>
<div class="a" style="left:12px;top:173px;width:146px;height:1px;background:#c4c4c4;"></div>
<svg class="a" style="left:82.5px;top:201.5px" width="7" height="10" viewBox="0 0 7 10"><path d="M0.8 1 L3 3.4 L5.2 1 M0.8 5 L3 7.4 L5.2 5" fill="none" stroke="#000" stroke-width="1.5"/></svg>
<svg class="a" style="left:12px;top:29px" width="21" height="19" viewBox="0 0 21 19"><defs><linearGradient id="nf" x1="0" y1="0" x2="0" y2="1"><stop offset="0" stop-color="#cdd6e2"/><stop offset="1" stop-color="#9aa9bd"/></linearGradient></defs><path d="M1.5 3 Q1.5 1.5 3 1.5 H7 L8.5 3 H16 Q17.5 3 17.5 4.5 V14.5 Q17.5 15.5 16.5 15.5 H2.5 Q1.5 15.5 1.5 14.5 Z" fill="url(#nf)" stroke="#7d8ca2"/><path d="M12 7.5 H15 V10.5 H18 V13.5 H15 V16.5 H12 V13.5 H9 V10.5 H12 Z" fill="#fff" stroke="#1c2a3a" stroke-width="1.4" stroke-linejoin="round"/></svg>
<svg class="a" style="left:12px;top:50px" width="20" height="18" viewBox="0 0 20 18"><path d="M1.5 4.5 Q1.5 3.5 2.5 3.5 H6 L7.5 5 H16 V16 H1.5 Z" fill="#c5cfdc" stroke="#8090a6"/><path d="M1.5 16 L4 9.5 H18.5 L16 16 Z" fill="#dfe5ee" stroke="#8090a6"/><path d="M8 6.5 Q9.5 2 14 2.5 V0.8 L18.5 4.5 L14 8.2 V6.3 Q10.5 5.8 8 6.5 Z" fill="#f2b63c" stroke="#b07a10" stroke-width="0.9" stroke-linejoin="round"/></svg>
<svg class="a" style="left:13px;top:73px" width="19" height="17" viewBox="0 0 19 17"><path d="M6 1.5 H12 L14 3.5 V12 H6 Z" fill="#f6f6f6" stroke="#d4d4d4"/><path d="M9 5 Q11 4 12 6 V9" fill="none" stroke="#d8d8d8"/><path d="M2 14.5 H17" stroke="#e2e2e2" stroke-width="2.5"/></svg>
<svg class="a" style="left:12px;top:100px" width="19" height="18" viewBox="0 0 19 18"><defs><linearGradient id="ab" x1="0" y1="0" x2="0" y2="1"><stop offset="0" stop-color="#b8dcf8"/><stop offset="1" stop-color="#4b97dc"/></linearGradient></defs><path d="M1 8.5 H17.5 V17 H1 Z" fill="#f2f5f8" stroke="#a3afbc"/><path d="M7.5 1 H11.5 V7 H14.5 L9.5 13 L4.5 7 H7.5 Z" fill="url(#ab)" stroke="#3a74b0" stroke-width="0.8" stroke-linejoin="round"/></svg>
<svg class="a" style="left:12px;top:122px" width="19" height="18" viewBox="0 0 19 18"><path d="M1 8 H17.5 V17 H1 Z" fill="#f2f5f8" stroke="#a3afbc"/><path d="M9.5 1 L14.5 7 H11.5 V13 H7.5 V7 H4.5 Z" fill="url(#ab)" stroke="#3a74b0" stroke-width="0.8" stroke-linejoin="round"/></svg>
<svg class="a" style="left:14px;top:152px" width="18" height="17" viewBox="0 0 18 17"><defs><linearGradient id="rb" x1="0" y1="0" x2="0" y2="1"><stop offset="0" stop-color="#9fcff4"/><stop offset="1" stop-color="#5aa2e0"/></linearGradient></defs><path d="M1 8.5 V5 Q1 3 3 3 H10.5 V0.6 L15.5 4.5 L10.5 8.4 V6 H4 V8.5 Z" fill="url(#rb)" stroke="#3f7dbc" stroke-width="0.8" stroke-linejoin="round"/><path d="M16.5 8 V11.5 Q16.5 13.5 14.5 13.5 H7 V15.9 L2 12 L7 8.1 V10.5 H13.5 V8 Z" fill="url(#rb)" stroke="#3f7dbc" stroke-width="0.8" stroke-linejoin="round"/></svg>
<svg class="a" style="left:140px;top:24px" width="50" height="56" viewBox="0 0 50 56">
<defs><linearGradient id="pk" x1="0" y1="0" x2="1" y2="1"><stop offset="0.1" stop-color="#f2b8f2"/><stop offset="0.9" stop-color="#fbeafb"/></linearGradient><filter id="sh" x="-50%" y="-50%" width="200%" height="200%"><feGaussianBlur stdDeviation="2.4"/></filter></defs>
<g stroke="#1e3550" stroke-width="1.8" stroke-linecap="round">
<path d="M14.7 6 L15 8.2"/><path d="M9.1 7.4 L10.4 9.2"/><path d="M6.4 12.6 L8.7 12.9"/><path d="M8.4 18.1 L10.4 17.1"/><path d="M18.5 9.7 L20.4 8.5"/>
</g>
<path d="M15 14 L20 37.8 L24.7 32 L30.9 39.7 L36.7 35.4 L31.3 26.5 L39 23 Z" fill="#000" opacity="1" filter="url(#sh)" transform="translate(0,5)"/>
<path d="M15 14 L20 37.8 L24.7 32 L30.9 39.7 L36.7 35.4 L31.3 26.5 L39 23 Z" fill="none" stroke="#fff" stroke-width="2.4" stroke-linejoin="round"/>
<path d="M15 14 L20 37.8 L24.7 32 L30.9 39.7 L36.7 35.4 L31.3 26.5 L39 23 Z" fill="url(#pk)" stroke="#000" stroke-width="1.3" stroke-linejoin="round"/>
</svg>
</body></html>
